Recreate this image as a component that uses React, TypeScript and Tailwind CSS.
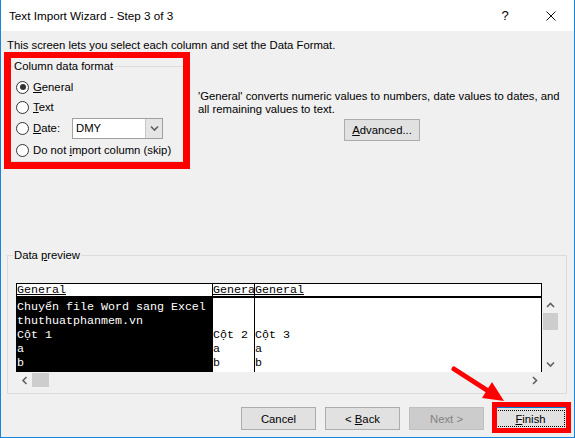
import React from "react";

const rows = [
  ["Chuyển file Word sang Excel", "", ""],
  ["thuthuatphanmem.vn", "", ""],
  ["Cột 1", "Cột 2", "Cột 3"],
  ["a", "a", "a"],
  ["b", "b", "b"],
];

const headers = ["General", "Genera", "General"];

function Radio({ checked, children }: { checked?: boolean; children: React.ReactNode }) {
  return (
    <div className="flex items-center">
      <span className="ml-[5px] flex h-[13px] w-[13px] items-center justify-center rounded-full border border-[#333333] bg-white">
        {checked && <span className="h-[6px] w-[6px] rounded-full bg-[#333333]" />}
      </span>
      <span className="ml-[4px]">{children}</span>
    </div>
  );
}

function Chevron({ dir }: { dir: "up" | "down" | "left" | "right" }) {
  const pts = {
    up: "1,5 4.5,1.5 8,5",
    down: "1,1.5 4.5,5 8,1.5",
    left: "5.5,1 2,4.5 5.5,8",
    right: "2,1 5.5,4.5 2,8",
  }[dir];
  const vertical = dir === "up" || dir === "down";
  return (
    <svg className={vertical ? "h-[7px] w-[9px]" : "h-[9px] w-[7px]"} viewBox={vertical ? "0 0 9 7" : "0 0 7 9"}>
      <polyline points={pts} fill="none" stroke="#606060" strokeWidth="1.6" />
    </svg>
  );
}

function Button({
  children,
  disabled,
  primary,
}: {
  children: React.ReactNode;
  disabled?: boolean;
  primary?: boolean;
}) {
  if (disabled)
    return (
      <div className="flex h-[23px] w-[75px] items-center justify-center border border-[#bfbfbf] bg-[#cccccc] text-[#838383]">
        <span>{children}</span>
      </div>
    );
  if (primary)
    return (
      <div className="flex h-[23px] w-[75px] items-center justify-center border border-[#0078d7] bg-[#e1e1e1] p-[2px]">
        <div className="flex h-full w-full items-center justify-center border border-dotted border-black">
          <span>{children}</span>
        </div>
      </div>
    );
  return (
    <div className="flex h-[23px] w-[75px] items-center justify-center border border-[#adadad] bg-[#e1e1e1]">
      <span>{children}</span>
    </div>
  );
}

export default function App() {
  return (
    <div className="relative flex h-[438px] w-[575px] flex-col overflow-hidden border-x border-b border-[#1883d7] bg-[#f0f0f0] font-['Liberation_Sans',Arial,sans-serif] text-[11.3px] leading-[14px] text-black">
      {/* title bar */}
      <div className="flex h-[31px] shrink-0 items-center bg-white">
        <span className="ml-[8px] text-[11.7px]">Text Import Wizard - Step 3 of 3</span>
        <div className="ml-auto flex h-full">
          <div className="flex w-[46px] items-center justify-center text-[13px]">?</div>
          <div className="flex w-[46px] items-center justify-center">
            <svg className="h-[10px] w-[10px]" viewBox="0 0 10 10">
              <path d="M0.5 0.5L9.5 9.5M9.5 0.5L0.5 9.5" stroke="#111" strokeWidth="1" />
            </svg>
          </div>
        </div>
      </div>

      <div className="ml-[6px] mt-[7px] h-[14px]">
        This screen lets you select each column and set the Data Format.
      </div>

      <div className="flex">
        {/* column data format group, framed in red */}
        <div className="ml-[3px] h-[117px] w-[186px] border-x-[7px] border-b-[7px] border-t-[6px] border-[#ff0000]">
          <div className="flex h-[16px] items-center">
            <div className="h-px w-[2px] bg-[#dcdcdc]" />
            <span className="px-[1px]">Column data format</span>
            <div className="h-px flex-1 bg-[#dcdcdc]" />
          </div>
          <div className="h-[3px]" />
          <div className="flex h-[20px] items-center">
            <Radio checked>
              <span className="underline">G</span>eneral
            </Radio>
          </div>
          <div className="flex h-[20px] items-center">
            <Radio>
              <span className="underline">T</span>ext
            </Radio>
          </div>
          <div className="flex h-[22px] items-center">
            <Radio>
              <span className="inline-block w-[39px]">
                <span className="underline">D</span>ate:
              </span>
            </Radio>
            <div className="flex h-[21px] w-[91px] border border-[#a0a0a0] bg-white">
              <span className="flex flex-1 items-center pl-[3px]">DMY</span>
              <span className="flex w-[17px] items-center justify-center border-l border-[#c8c8c8] bg-[#e5e5e5]">
                <Chevron dir="down" />
              </span>
            </div>
          </div>
          <div className="flex h-[22px] items-center">
            <Radio>
              Do not <span className="underline">i</span>mport column (skip)
            </Radio>
          </div>
          <div className="h-px bg-[#dcdcdc]" />
        </div>

        <div className="ml-[8px] flex w-[368px] flex-col pt-[38px]">
          <div className="whitespace-nowrap leading-[13px]">
            'General' converts numeric values to numbers, date values to dates, and
            <br />
            all remaining values to text.
          </div>
          <div className="mt-[3px] flex justify-center">
            <div className="flex h-[22px] w-[76px] items-center justify-center border border-[#adadad] bg-[#e1e1e1]">
              <span>
                <span className="underline">A</span>dvanced...
              </span>
            </div>
          </div>
        </div>
      </div>

      {/* data preview group */}
      <div className="ml-[6px] mt-[86px] h-[139px] w-[560px] shrink-0 border border-[#dcdcdc]">
        <div className="-mt-[8px] ml-[5px] h-[16px] w-fit bg-[#f0f0f0] px-[1px]">
          Data <span className="underline">p</span>review
        </div>
        <div className="ml-[8px] mt-[19px] flex">
          <div className="flex w-[526px] flex-col">
            <div className="flex h-[89px] overflow-hidden border-x border-t border-black bg-white font-['Liberation_Mono','Courier_New',monospace] text-[11.67px] leading-[14px]">
              {[0, 1, 2].map((c) => (
                <div
                  key={c}
                  className={
                    c === 0
                      ? "flex w-[195px] shrink-0 flex-col"
                      : c === 1
                        ? "flex w-[42px] shrink-0 flex-col overflow-hidden border-l border-black"
                        : "flex flex-1 flex-col border-l border-black"
                  }
                >
                  <div className="h-[14px] shrink-0 overflow-hidden whitespace-nowrap border-b-2 border-black leading-[12px] underline">
                    {headers[c]}
                  </div>
                  <div className={c === 0 ? "flex-1 bg-black pt-[2px] text-white" : "flex-1 pt-[2px]"}>
                    {rows.map((r, i) => (
                      <div key={i} className="h-[14px] whitespace-pre">
                        {r[c]}
                      </div>
                    ))}
                  </div>
                </div>
              ))}
            </div>
            <div className="flex h-[16px] items-center">
              <div className="flex w-[16px] items-center justify-center">
                <Chevron dir="left" />
              </div>
              <div className="h-[14px] w-[17px] bg-[#cdcdcd]" />
              <div className="flex-1" />
              <div className="flex w-[16px] items-center justify-center">
                <Chevron dir="right" />
              </div>
            </div>
          </div>
          <div className="mt-[14px] flex h-[75px] w-[17px] flex-col items-center">
            <div className="flex h-[16px] w-full items-center justify-center">
              <Chevron dir="up" />
            </div>
            <div className="h-[17px] w-[15px] bg-[#cdcdcd]" />
            <div className="flex-1" />
            <div className="flex h-[16px] w-full items-center justify-center">
              <Chevron dir="down" />
            </div>
          </div>
        </div>
      </div>

      {/* buttons */}
      <div className="mt-[13px] flex justify-end gap-[9px] pr-[6px]">
        <Button>Cancel</Button>
        <Button>
          &lt; <span className="underline">B</span>ack
        </Button>
        <Button disabled>Next &gt;</Button>
        <Button primary>
          <span className="underline">F</span>inish
        </Button>
      </div>

      {/* red annotations over the finish button */}
      <div className="absolute left-[491px] top-[402px] h-[31px] w-[79px] border-[5px] border-[#ff0000]" />
      <svg className="pointer-events-none absolute left-0 top-0 h-[438px] w-[575px]" viewBox="0 0 575 438">
        <line x1="453" y1="369" x2="488" y2="391.5" stroke="#ff0000" strokeWidth="5" strokeLinecap="round" />
        <polygon points="503,401 481,398 491,382" fill="#ff0000" />
      </svg>
    </div>
  );
}
